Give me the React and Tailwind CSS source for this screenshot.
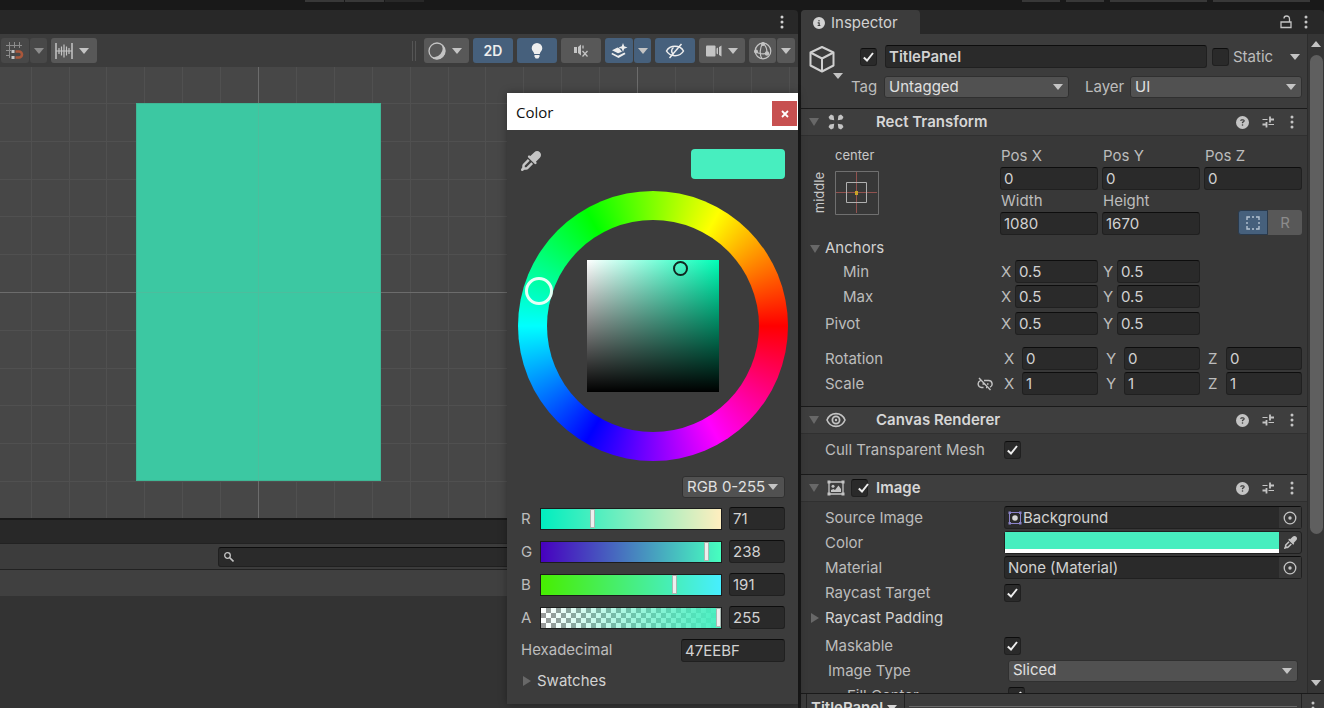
import { useState } from 'react';
import clsx from 'clsx';
import { FaEyeDropper, FaCircleInfo, FaCircleQuestion } from 'react-icons/fa6';

const CELL = 38;
const gridSteps = Array.from({ length: 60 }, (_, i) => i - 20).filter((n) => n % 10 !== 0);

const fieldClass =
  'min-w-0 bg-[#2a2a2a] border border-[#202020] border-t-[#0d0d0d] rounded-[3px] text-[#d2d2d2] outline-none';

const channels = [
  { id: 'R', value: 71, track: 'bg-[linear-gradient(to_right,#00eebf,#ffeebf)]' },
  { id: 'G', value: 238, track: 'bg-[linear-gradient(to_right,#4700bf,#47ffbf)]' },
  { id: 'B', value: 191, track: 'bg-[linear-gradient(to_right,#47ee00,#47eeff)]' },
  {
    id: 'A',
    value: 255,
    track:
      'bg-[linear-gradient(to_right,transparent,#47eebf),repeating-conic-gradient(#999_0_25%,#fff_0_50%)] [background-size:auto,10px_10px]'
  }
];

/* Small icons */

const Caret = ({ className }) => (
  <svg className={clsx('shrink-0', className)} width="10" height="6" viewBox="0 0 10 6" fill="currentColor">
    <path d="M0 0h10L5 6z" />
  </svg>
);

const Foldout = ({ open }) => (
  <svg className="shrink-0 text-[#686868]" width="10" height="10" viewBox="0 0 10 10" fill="currentColor">
    {open ? <path d="M0 1h10L5 9z" /> : <path d="M1 0v10l8-5z" />}
  </svg>
);

const Kebab = () => (
  <svg width="4" height="14" viewBox="0 0 4 14" fill="currentColor">
    <circle cx="2" cy="2" r="1.5" />
    <circle cx="2" cy="7" r="1.5" />
    <circle cx="2" cy="12" r="1.5" />
  </svg>
);

const PresetIcon = () => (
  <svg width="14" height="14" viewBox="0 0 14 14" fill="none" stroke="currentColor">
    <path d="M1.500 4.500h5M7.500 9.500H13" strokeWidth="1.200" />
    <path d="M9 1.500v6M9 4.500h4M5.500 7v5.500M1.500 9.500h4" strokeWidth="1.800" />
  </svg>
);

const SnapIcon = () => (
  <svg width="20" height="20" viewBox="0 0 20 20" fill="none">
    <path d="M1 4.500h16M1 9.500h5M1 14.500h4M4.500 1v16M9.500 1v6M14.500 1v6" stroke="#8c8c8c" />
    <path d="M10.500 10.500h3.500a3 3 0 0 1 0 6h-3.500" stroke="#a9573b" strokeWidth="2.600" />
    <path d="M6.500 9h3v3h-3zM6.500 15h3v3h-3z" fill="#c4c4c4" />
  </svg>
);

const RulerIcon = () => (
  <svg width="18" height="18" viewBox="0 0 18 18" fill="none" stroke="#c4c4c4">
    <path d="M1 1v16M17 1v16" strokeWidth="1.500" />
    <path d="M1 9h16M4 6v6M6.500 4.500v9M9 2.500v13M11.500 4.500v9M14 6v6" strokeWidth="1.200" />
  </svg>
);

const ShadingIcon = () => (
  <svg width="18" height="18" viewBox="0 0 18 18">
    <circle cx="9" cy="9" r="8" fill="none" stroke="#c4c4c4" strokeWidth="1.300" />
    <path d="M13 1.800a8.300 8.300 0 1 1-10.500 12.500A8.500 8.500 0 0 0 13 1.800z" fill="#c4c4c4" />
  </svg>
);

const BulbIcon = () => (
  <svg width="12" height="16" viewBox="0 0 12 16" fill="#eee">
    <path d="M6 0a5.300 5.300 0 0 1 5.300 5.300c0 2.500-2.300 3.500-2.500 5.700H3.200C3 8.800.7 7.800.7 5.300A5.300 5.300 0 0 1 6 0z" />
    <path d="M3.500 12h5v1.500L7.300 15.500H4.700L3.500 13.500z" />
  </svg>
);

const MuteIcon = () => (
  <svg width="15" height="14" viewBox="0 0 15 14" fill="none" stroke="#c4c4c4">
    <path d="M0 3h3v6H0z" fill="#c4c4c4" stroke="none" />
    <path d="M4 3l3-2.500v11L4 9z" fill="#c4c4c4" stroke="none" />
    <path d="M8.500 7l5 5.500M13.500 7l-5 5.500" strokeWidth="1.300" />
    <path d="M9 1.500v3" strokeWidth="1.300" />
  </svg>
);

const EffectsIcon = () => (
  <svg width="17" height="16" viewBox="0 0 17 16" fill="#eee">
    <path d="M12 0l1.200 3.300L16.500 4.500l-3.300 1.200L12 9l-1.200-3.300L7.500 4.500l3.300-1.200z" />
    <path d="M1 7.200L6.500 4.500l1.500.8 1.500 1.400 1.500 2L7 10.300z" />
    <path d="M1 9.800l6 2.900 6.500-3.100 1 1.400L7.500 15 .5 11.300z" />
  </svg>
);

const HiddenIcon = () => (
  <svg width="20" height="16" viewBox="0 0 20 16" fill="none" stroke="#eee" strokeWidth="1.500">
    <path d="M1.500 8C5 1.800 15 1.800 18.500 8 15 14.200 5 14.200 1.500 8z" />
    <path d="M8.500 4.500c-2.500 1.800-2.500 5 0 7" />
    <path d="M16.500 1l-12 14" />
  </svg>
);

const CameraIcon = () => (
  <svg width="16" height="12" viewBox="0 0 16 12" fill="#c4c4c4">
    <rect width="9.500" height="11" y="0.500" rx="1" />
    <path d="M10.500 3.500L12 2.500v7l-1.500-1zM13 2l2.500-1.500v11L13 10z" />
  </svg>
);

const GizmoIcon = () => (
  <svg width="18" height="18" viewBox="0 0 18 18" fill="none" stroke="#c4c4c4" strokeWidth="1.200">
    <circle cx="9" cy="9" r="7.800" />
    <path d="M9 1.500C5.500 5 5.500 13 8 16.500M9 1.500c3.500 2.500 4 6 4 9.500M1.500 9.500c3 2.500 8.500 3 12 1.500" />
    <circle cx="9" cy="2" r="1.400" fill="#c4c4c4" />
    <circle cx="2" cy="9.500" r="1.400" fill="#c4c4c4" />
    <circle cx="13" cy="11.500" r="1.600" fill="#c4c4c4" />
  </svg>
);

const CubeIcon = () => (
  <svg width="26" height="28" viewBox="0 0 26 28" fill="none" stroke="#d0d0d0" strokeWidth="2" strokeLinejoin="round">
    <path d="M13 2l11.500 5.500v13L13 26.500 1.500 20.500v-13z" />
    <path d="M1.500 7.500L13 13.500l11.500-6M13 13.500v13" />
  </svg>
);

const LockIcon = () => (
  <svg width="12" height="14" viewBox="0 0 12 14" fill="none" stroke="currentColor" strokeWidth="1.300">
    <path d="M1 7h10v5.500H1z" />
    <path d="M9.500 7V4C9.500 2 8.500 1 6.500 1S4 2 4 3.500" />
  </svg>
);

const RectTransformIcon = () => (
  <svg width="16" height="16" viewBox="0 0 16 16" fill="#c4c4c4">
    <path d="M6.200 6.200L1.800 5.600.500 3 3 .500 5.600 1.800zM9.800 6.200l.600-4.400L13 .500 15.500 3 14.200 5.600zM6.200 9.800l-.600 4.400L3 15.500.500 13l1.300-2.600zM9.800 9.800l4.400.600L15.500 13 13 15.500l-2.600-1.300z" />
  </svg>
);

const EyeIcon = () => (
  <svg width="20" height="16" viewBox="0 0 20 16" fill="none" stroke="#c4c4c4">
    <path d="M1 8C4.500 -.500 15.500 -.500 19 8 15.500 16.500 4.500 16.500 1 8z" strokeWidth="1.600" />
    <circle cx="10" cy="8" r="3.600" strokeWidth="1.800" />
    <circle cx="10" cy="8" r="1.200" fill="#c4c4c4" stroke="none" />
  </svg>
);

const ImageIcon = () => (
  <svg width="18" height="16" viewBox="0 0 18 16" fill="#c4c4c4">
    <path d="M2 2h14v12H2z" fill="none" stroke="#c4c4c4" strokeWidth="1.300" />
    <path d="M.500.500h3v3h-3zM14.500.500h3v3h-3zM.500 12.500h3v3h-3zM14.500 12.500h3v3h-3z" />
    <circle cx="6" cy="6.300" r="1.500" />
    <path d="M4 12V10l2.500-1 1.500 1 3.500-4.500L14 9v3z" />
  </svg>
);

const SpriteIcon = () => (
  <svg className="shrink-0" width="14" height="14" viewBox="0 0 14 14" fill="#8b83c9">
    <path d="M1.500 1.500h11v11h-11z" fill="none" stroke="#8b83c9" />
    <path d="M.500.500h2.500v2.500H.500zM11 .500h2.500v2.500H11zM.500 11h2.500v2.500H.500zM11 11h2.500v2.500H11z" />
    <circle cx="7" cy="7" r="2.800" fill="#d8d8d8" />
  </svg>
);

const TargetIcon = () => (
  <svg width="14" height="14" viewBox="0 0 14 14" fill="none" stroke="#c4c4c4" strokeWidth="1.300">
    <circle cx="7" cy="7" r="5.800" />
    <circle cx="7" cy="7" r="1.700" fill="#c4c4c4" stroke="none" />
  </svg>
);

const UnlinkIcon = () => (
  <svg width="16" height="14" viewBox="0 0 16 14" fill="none" stroke="#c4c4c4" strokeWidth="1.400">
    <path d="M6.500 10.500H4.500a3.500 3.500 0 0 1-1-6.800M7 3.500h4.500a3.500 3.500 0 0 1 1.500 6.700M9 10.500h1M5.500 7h2M10 7h1.500M2 1l11.500 12" />
  </svg>
);

const AnchorIcon = () => (
  <svg width="44" height="44" viewBox="0 0 44 44" fill="none">
    <path d="M.500.500h43v43H.500z" stroke="#707070" />
    <path d="M21.500 1v41M1 21.500h41" stroke="#92524f" />
    <path d="M11.500 11.500h20v20h-20z" stroke="#b0b0b0" />
    <path d="M20 20h3v4h-3z" fill="#c9a227" />
  </svg>
);

const SearchIcon = () => (
  <svg width="10" height="10" viewBox="0 0 10 10" fill="none" stroke="#c4c4c4">
    <circle cx="3.500" cy="3.500" r="2.800" strokeWidth="1.300" />
    <path d="M5.500 5.500L9.500 9.500" strokeWidth="1.600" />
  </svg>
);

/* Controls */

const ToolButton = ({ active, dim, className, children, label }) => (
  <button
    aria-label={label}
    className={clsx(
      'h-[25px] flex items-center justify-center gap-[6px] rounded-[3px]',
      active ? 'bg-[#46607c] text-[#eeeeee]' : dim ? 'bg-[#484848] text-[#8c8c8c]' : 'bg-[#585858] text-[#c4c4c4]',
      className
    )}
  >
    {children}
  </button>
);

const Checkbox = ({ id, label, defaultChecked = true }) => (
  <span className="relative flex shrink-0">
    <input
      id={id}
      type="checkbox"
      aria-label={label}
      defaultChecked={defaultChecked}
      className="peer appearance-none w-[17px] h-[18px] bg-[#2a2a2a] border border-[#202020] border-t-[#0d0d0d] rounded-[3px]"
    />
    <svg
      className="absolute inset-0 m-auto hidden peer-checked:block pointer-events-none"
      width="11"
      height="10"
      viewBox="0 0 11 10"
      fill="none"
      stroke="#eee"
      strokeWidth="2"
    >
      <path d="M.800 5.500L4 8.500 10 1" />
    </svg>
  </span>
);

const Dropdown = ({ id, label, options, className, caretClass = 'right-[6px]' }) => (
  <span className={clsx('relative flex', className)}>
    <select
      id={id}
      aria-label={label}
      className="appearance-none w-full h-[22px] pl-1 pb-px leading-[18px] bg-[#515151] border border-[#303030] rounded-[3px] text-[#e0e0e0] outline-none"
    >
      {options.map((option) => (
        <option key={option}>{option}</option>
      ))}
    </select>
    <Caret className={clsx('absolute top-2 pointer-events-none text-[#c4c4c4]', caretClass)} />
  </span>
);

const AxisField = ({ name, axis, value, wide }) => (
  <label className="flex items-center">
    <span className={clsx('shrink-0', wide ? 'w-[22px] pl-1' : 'w-[15px] pl-px')}>{axis}</span>
    <input aria-label={`${name} ${axis}`} defaultValue={value} className={clsx(fieldClass, 'w-full h-[23px] px-[3px]')} />
  </label>
);

const StackedField = ({ label, value }) => (
  <label className="flex flex-col">
    <span className="h-[22px] leading-[22px] pl-px">{label}</span>
    <input defaultValue={value} className={clsx(fieldClass, 'w-full h-[23px] px-[3px]')} />
  </label>
);

const VectorRow = ({ label, values, wide, indent, className, children }) => (
  <div className={clsx('flex h-[25px] items-center', className)}>
    <div className={clsx('flex-1 flex items-center justify-between pr-[7px]', indent ? 'pl-[42px]' : 'pl-6')}>
      <span>{label}</span>
      {children}
    </div>
    <div className="w-[302px] grid grid-cols-3 gap-1">
      {values.map((value, i) => (
        <AxisField key={i} name={label} axis={'XYZ'[i]} value={value} wide={wide} />
      ))}
    </div>
  </div>
);

const PropertyRow = ({ label, htmlFor, className, labelClass = 'pl-6', children }) => (
  <div className={clsx('flex h-[25px] items-center', className)}>
    <label htmlFor={htmlFor} className={clsx('flex-1', labelClass)}>
      {label}
    </label>
    <div className="w-[298px] flex items-center">{children}</div>
  </div>
);

const ObjectField = ({ id, value, icon }) => (
  <div className={clsx(fieldClass, 'flex-1 flex h-[23px] items-center')}>
    <div className="flex-1 flex items-center gap-px pl-[3px]">
      {icon}
      <input id={id} readOnly defaultValue={value} className="flex-1 min-w-0 bg-transparent outline-none" />
    </div>
    <button aria-label={`Pick ${value}`} className="w-[22px] h-full flex items-center justify-center bg-[#373737]">
      <TargetIcon />
    </button>
  </div>
);

const ComponentHeader = ({ icon, title, toggle }) => (
  <div className="flex h-7 items-center border-t border-t-[#1a1a1a] border-b border-b-[#303030] bg-[#3e3e3e] pl-2 pr-[10px]">
    <button aria-label={`Fold ${title}`} className="flex w-[17px]">
      <Foldout open />
    </button>
    <span className="w-5 flex justify-center">{icon}</span>
    <span className="w-[30px] pl-[5px]">{toggle && <Checkbox label={`Enable ${title}`} />}</span>
    <h2 className="flex-1 font-semibold text-[#d6d6d6]">{title}</h2>
    <div className="flex items-center gap-3 text-[#c4c4c4]">
      <button aria-label={`${title} help`}>
        <FaCircleQuestion size={13} />
      </button>
      <button aria-label={`${title} presets`}>
        <PresetIcon />
      </button>
      <button aria-label={`${title} menu`} className="w-[10px] flex justify-center">
        <Kebab />
      </button>
    </div>
  </div>
);

/* Panels */

const SceneToolbar = () => (
  <div className="flex h-[33px] items-center justify-between bg-[#3c3c3c] pl-px pr-[3px]">
    <div className="flex gap-1">
      <div className="flex gap-px">
        <ToolButton dim label="Grid snapping" className="w-7">
          <SnapIcon />
        </ToolButton>
        <ToolButton dim label="Grid snapping options" className="w-[17px]">
          <Caret />
        </ToolButton>
      </div>
      <ToolButton label="Snap increment" className="w-[46px] pr-1">
        <RulerIcon />
        <Caret />
      </ToolButton>
    </div>
    <div className="flex items-center gap-1">
      <span className="w-1 h-5 border-x border-[#555555] mr-1" />
      <ToolButton label="Shading mode" className="w-[45px] pr-1">
        <ShadingIcon />
        <Caret />
      </ToolButton>
      <ToolButton active className="w-10">
        <span className="text-sm font-semibold">2D</span>
      </ToolButton>
      <ToolButton active label="Scene lighting" className="w-10">
        <BulbIcon />
      </ToolButton>
      <ToolButton label="Scene audio" className="w-10">
        <MuteIcon />
      </ToolButton>
      <div className="flex gap-px">
        <ToolButton active label="Effects" className="w-7">
          <EffectsIcon />
        </ToolButton>
        <ToolButton active label="Effects options" className="w-[17px]">
          <Caret className="text-[#c4c4c4]" />
        </ToolButton>
      </div>
      <ToolButton active label="Hidden objects" className="w-10">
        <HiddenIcon />
      </ToolButton>
      <ToolButton label="Camera settings" className="w-[46px]">
        <CameraIcon />
        <Caret />
      </ToolButton>
      <div className="flex gap-px">
        <ToolButton label="Gizmos" className="w-[27px]">
          <GizmoIcon />
        </ToolButton>
        <ToolButton label="Gizmo options" className="w-[18px]">
          <Caret />
        </ToolButton>
      </div>
    </div>
  </div>
);

// Grid lines are placed around the scene origin
const SceneViewport = () => (
  <svg className="w-full flex-1 min-h-0 bg-[#474747]">
    <svg x="258" y="225" overflow="visible">
      {gridSteps.map((n) => (
        <g key={n} stroke="#505050">
          <path d={`M${Math.round(n * (CELL - 0.1)) + 0.5} -400V700`} />
          <path d={`M-400 ${Math.round(n * (CELL - 0.2)) + 0.5}H1600`} />
        </g>
      ))}
      <rect x="-121.500" y="-188.500" width="244" height="377" fill="#3cc8a2" stroke="#3fb795" />
      <path d="M.500 -188V188M-121 .500H122" stroke="#4dbd9d" />
      <path d="M.500 -400V-189M.500 189V700M-400 .500H-122M123 .500H1600" stroke="#6c6c6c" />
      <path d="M379.500 -400V700" stroke="#6c6c6c" />
    </svg>
  </svg>
);

const ProjectPanel = () => (
  <section className="h-[190px] shrink-0 flex flex-col border-t-2 border-[#191919] bg-[#333333]">
    <div className="h-6 bg-[#282828] border-b border-[#222222]" />
    <div className="flex h-[26px] items-center bg-[#3c3c3c] border-b border-[#222222] pl-[218px]">
      <label className={clsx(fieldClass, 'flex-1 flex items-center h-5 pl-[5px] gap-1')}>
        <SearchIcon />
        <input aria-label="Search" type="text" className="flex-1 bg-transparent outline-none" />
      </label>
    </div>
    <div className="h-[26px] bg-[#404040]" />
  </section>
);

const ColorWheel = () => (
  <div className="relative mx-auto mt-3 size-[270px] rounded-full bg-[conic-gradient(from_90deg,#f00,#f0f,#00f,#0ff,#0f0,#ff0,#f00)] grid place-items-center">
    <div className="size-[212px] rounded-full bg-[#3c3c3c] grid place-items-center">
      <div className="relative size-[132px] bg-[linear-gradient(to_top,#000,transparent),linear-gradient(to_right,#fff,#00ffb7)]">
        <span className="absolute left-[86px] top-px size-[15px] rounded-full border-2 border-[#10261f]" />
      </div>
    </div>
    <span className="absolute left-[7px] top-[86px] size-7 rounded-full border-[3px] border-[#e4fff6]" />
  </div>
);

const ChannelRow = ({ channel }) => {
  const [value, setValue] = useState(channel.value);

  return (
    <div className="flex h-[33px] items-center">
      <label htmlFor={`channel-${channel.id}`} className="w-[19px]">
        {channel.id}
      </label>
      <input
        id={`channel-${channel.id}`}
        type="range"
        min="0"
        max="255"
        value={value}
        onChange={(e) => setValue(Number(e.target.value))}
        className={clsx(
          'appearance-none flex-1 min-w-0 h-[22px] border border-[#1c1c1c] [&::-webkit-slider-thumb]:appearance-none [&::-webkit-slider-thumb]:w-[5px] [&::-webkit-slider-thumb]:h-[19px] [&::-webkit-slider-thumb]:bg-[#eeeeee] [&::-webkit-slider-thumb]:border [&::-webkit-slider-thumb]:border-[#a8b8b2]',
          channel.track
        )}
      />
      <input
        aria-label={`${channel.id} value`}
        value={value}
        onChange={(e) => setValue(Number(e.target.value) || 0)}
        className={clsx(fieldClass, 'w-[56px] h-[23px] ml-[7px] px-[3px]')}
      />
    </div>
  );
};

const ColorDialog = () => (
  <section
    role="dialog"
    aria-label="Color"
    className="absolute right-0 top-[83px] w-[291px] bg-[#3c3c3c] shadow-[0_0_8px_rgba(0,0,0,0.35)]"
  >
    <div className="flex h-[37px] items-end justify-between bg-white pl-[9px] pr-px pb-1">
      <h2 className="font-['Open_Sans','Noto_Sans',sans-serif] text-[15px] leading-7 text-[#111111]">Color</h2>
      <button aria-label="Close" className="size-[25px] flex items-center justify-center bg-[#c75050]">
        <svg width="8" height="8" viewBox="0 0 8 8" fill="none" stroke="#fff" strokeWidth="1.800">
          <path d="M1 1l6 6M7 1L1 7" />
        </svg>
      </button>
    </div>
    <div className="flex justify-between pt-[19px] pl-[14px] pr-[13px]">
      <button aria-label="Pick color" className="mt-0.5 h-5 text-[#c4c4c4]">
        <FaEyeDropper size={20} />
      </button>
      <div className="w-[94px] h-[30px] rounded-[4px] bg-[#47eebf]" />
    </div>
    <ColorWheel />
    <div className="pt-[15px] pb-2 pl-[14px] pr-[13px]">
      <div className="flex justify-end mb-1">
        <Dropdown label="Color mode" options={['RGB 0-255', 'RGB 0-1.0', 'HSV']} className="w-[103px]" caretClass="right-[7px]" />
      </div>
      {channels.map((channel) => (
        <ChannelRow key={channel.id} channel={channel} />
      ))}
      <label className="flex h-8 items-center justify-between">
        Hexadecimal
        <input defaultValue="47EEBF" className={clsx(fieldClass, 'w-[104px] h-[23px] px-[3px]')} />
      </label>
      <button className="flex h-[30px] items-center gap-[5px] pl-px text-[#d2d2d2]">
        <Foldout />
        Swatches
      </button>
    </div>
  </section>
);

const GameObjectHeader = () => (
  <div className="flex bg-[#3c3c3c] pt-[11px] pb-[10px] pr-[5px]">
    <button aria-label="Icon" className="w-[50px] pl-2 flex flex-col items-start text-[#c4c4c4]">
      <CubeIcon />
      <Caret className="ml-6" />
    </button>
    <div className="flex-1 flex flex-col gap-2">
      <div className="flex items-center pl-[9px]">
        <Checkbox label="Active" />
        <input
          aria-label="Name"
          defaultValue="TitlePanel"
          className={clsx(fieldClass, 'flex-1 h-[23px] ml-2 mr-[5px] px-[3px] font-semibold')}
        />
        <Checkbox id="static" defaultChecked={false} />
        <label htmlFor="static" className="w-[59px] pl-1">
          Static
        </label>
        <button aria-label="Static options" className="w-[14px] flex justify-center text-[#c4c4c4]">
          <Caret />
        </button>
      </div>
      <div className="flex items-center">
        <label htmlFor="tag" className="w-[33px]">
          Tag
        </label>
        <Dropdown id="tag" options={['Untagged']} className="flex-1" />
        <label htmlFor="layer" className="w-[61px] pl-4">
          Layer
        </label>
        <Dropdown id="layer" options={['UI']} className="w-[172px]" />
      </div>
    </div>
  </div>
);

const RectTransform = () => (
  <section>
    <ComponentHeader title="Rect Transform" icon={<RectTransformIcon />} />
    <div className="pt-[9px] pb-[10px] pr-[5px]">
      <div className="flex">
        <div className="flex-1 flex text-[13px] text-[#c8c8c8]">
          <span className="w-[34px] pl-2 pt-[26px] h-[70px] leading-5 [writing-mode:sideways-lr] text-center">middle</span>
          <div className="flex flex-col items-start gap-[6px]">
            <span className="leading-5">center</span>
            <button aria-label="Anchor presets">
              <AnchorIcon />
            </button>
          </div>
        </div>
        <div className="w-[302px] grid grid-cols-3 gap-x-1">
          <StackedField label="Pos X" value="0" />
          <StackedField label="Pos Y" value="0" />
          <StackedField label="Pos Z" value="0" />
          <StackedField label="Width" value="1080" />
          <StackedField label="Height" value="1670" />
          <div className="flex items-end justify-end">
            <button aria-label="Blueprint mode" className="w-[30px] h-[25px] flex items-center justify-center bg-[#46607c] border border-[#2a3a4c] rounded-l-[3px]">
              <svg width="14" height="14" viewBox="0 0 14 14" fill="none" stroke="#b5c3d2" strokeWidth="1.400">
                <path d="M1 4V1h3M6 1h2M10 1h3v3M13 6v2M13 10v3h-3M8 13H6M4 13H1v-3M1 8V6" />
              </svg>
            </button>
            <button className="w-[34px] h-[25px] bg-[#585858] rounded-r-[3px] text-[#8c8c8c]">R</button>
          </div>
        </div>
      </div>
      <button className="flex h-6 items-end gap-[5px] pl-[9px] text-[#d2d2d2]">
        <span className="flex h-5 items-center">
          <Foldout open />
        </span>
        <span className="pb-px">Anchors</span>
      </button>
      <VectorRow label="Min" indent values={['0.5', '0.5']} />
      <VectorRow label="Max" indent values={['0.5', '0.5']} />
      <VectorRow label="Pivot" values={['0.5', '0.5']} className="mt-0.5" />
      <VectorRow label="Rotation" wide values={['0', '0', '0']} className="mt-[10px]" />
      <VectorRow label="Scale" wide values={['1', '1', '1']}>
        <button aria-label="Constrain proportions">
          <UnlinkIcon />
        </button>
      </VectorRow>
    </div>
  </section>
);

const CanvasRenderer = () => (
  <section>
    <ComponentHeader title="Canvas Renderer" icon={<EyeIcon />} />
    <div className="pt-[3px] pb-3 pr-[5px]">
      <PropertyRow label="Cull Transparent Mesh" htmlFor="cull">
        <Checkbox id="cull" />
      </PropertyRow>
    </div>
  </section>
);

const ImageComponent = () => (
  <section>
    <ComponentHeader title="Image" icon={<ImageIcon />} toggle />
    <div className="pt-[3px] pr-[5px]">
      <PropertyRow label="Source Image" htmlFor="source">
        <ObjectField id="source" value="Background" icon={<SpriteIcon />} />
      </PropertyRow>
      <PropertyRow label="Color" htmlFor="color">
        <div className="flex-1 flex h-[23px] border border-[#202020] rounded-[3px]">
          <button id="color" aria-label="Color value" className="flex-1 bg-[#47eebf] border-b-4 border-white" />
          <button aria-label="Pick color" className="w-[22px] flex items-center justify-center text-[#c4c4c4]">
            <FaEyeDropper size={13} />
          </button>
        </div>
      </PropertyRow>
      <PropertyRow label="Material" htmlFor="material">
        <ObjectField id="material" value="None (Material)" />
      </PropertyRow>
      <PropertyRow label="Raycast Target" htmlFor="raycast">
        <Checkbox id="raycast" />
      </PropertyRow>
      <button className="flex h-[25px] items-center gap-[5px] pl-[9px] text-[#d2d2d2]">
        <Foldout />
        Raycast Padding
      </button>
      <PropertyRow label="Maskable" htmlFor="maskable" className="mt-[3px]">
        <Checkbox id="maskable" />
      </PropertyRow>
      <PropertyRow label="Image Type" htmlFor="type" labelClass="pl-[27px]">
        <Dropdown id="type" options={['Sliced', 'Simple', 'Tiled', 'Filled']} className="flex-1 ml-1 mr-1" />
      </PropertyRow>
      <PropertyRow label="Fill Center" htmlFor="fill" labelClass="pl-[46px]">
        <span className="ml-1">
          <Checkbox id="fill" />
        </span>
      </PropertyRow>
    </div>
  </section>
);

const Scrollbar = () => (
  <div className="w-[17px] flex flex-col items-center bg-[#353535] border-l border-[#2c2c2c] py-[7px] text-[#c4c4c4]">
    <Caret className="rotate-180" />
    <div className="w-[13px] mt-2 grow-[478] rounded-full bg-[#5f5f5f]" />
    <div className="grow-[146]" />
    <Caret />
  </div>
);

const Inspector = () => (
  <aside className="w-[523px] shrink-0 flex flex-col">
    <div className="flex h-6 justify-between bg-[#282828] rounded-t-[4px]">
      <button className="flex items-center gap-[6px] w-[119px] pl-3 pt-px bg-[#3c3c3c] rounded-t-[4px] text-[#d2d2d2]">
        <FaCircleInfo size={12} />
        Inspector
      </button>
      <div className="flex items-center gap-3 pr-4 text-[#c4c4c4]">
        <button aria-label="Lock">
          <LockIcon />
        </button>
        <button aria-label="Inspector menu">
          <Kebab />
        </button>
      </div>
    </div>
    <div className="flex-1 min-h-0 flex">
      <div className="flex-1 overflow-hidden bg-[#383838]">
        <GameObjectHeader />
        <RectTransform />
        <CanvasRenderer />
        <ImageComponent />
      </div>
      <Scrollbar />
    </div>
    <footer className="h-[15px] shrink-0 overflow-hidden border-t border-[#1a1a1a] bg-[#3c3c3c]">
      <div className="flex h-7 items-center pl-[5px]">
        <button className="flex h-full items-center gap-1 w-[99px] pl-1 border-x border-[#222222] font-semibold text-[#d6d6d6]">
          TitlePanel
          <Caret />
        </button>
        <span className="flex-1 h-px mx-1 mb-1 bg-[#6a6a6a]" />
        <button aria-label="Preview menu" className="flex h-full w-[23px] items-center justify-center border-l border-[#222222] text-[#c4c4c4]">
          <Kebab />
        </button>
      </div>
    </footer>
  </aside>
);

const TopStrip = () => (
  <div className="flex h-[10px] shrink-0 justify-between pl-[305px] pr-[14px]">
    <div className="flex gap-px">
      <span className="w-[39px] h-0.5 bg-[#383838]" />
      <span className="w-[39px] h-0.5 bg-[#383838]" />
      <span className="w-[39px] h-0.5 bg-[#282828]" />
    </div>
    <div className="flex gap-[6px]">
      <span className="w-[38px] h-0.5 bg-[#383838]" />
      <span className="w-[38px] h-0.5 bg-[#383838]" />
      <span className="w-[97px] h-0.5 bg-[#383838]" />
      <span className="w-[97px] h-0.5 bg-[#383838]" />
    </div>
  </div>
);

export default function App() {
  return (
    <div className="h-screen flex flex-col overflow-hidden bg-[#191919] font-['Inter',sans-serif] text-[15px] leading-5 text-[#bcbcbc]">
      <TopStrip />
      <div className="flex-1 min-h-0 flex gap-[3px]">
        <main className="relative flex-1 min-w-0 flex flex-col">
          <div className="flex h-6 shrink-0 items-center justify-end bg-[#282828] rounded-tr-[4px] pr-[14px] text-[#d2d2d2]">
            <button aria-label="Scene menu">
              <Kebab />
            </button>
          </div>
          <SceneToolbar />
          <SceneViewport />
          <ProjectPanel />
          <ColorDialog />
        </main>
        <Inspector />
      </div>
    </div>
  );
}
